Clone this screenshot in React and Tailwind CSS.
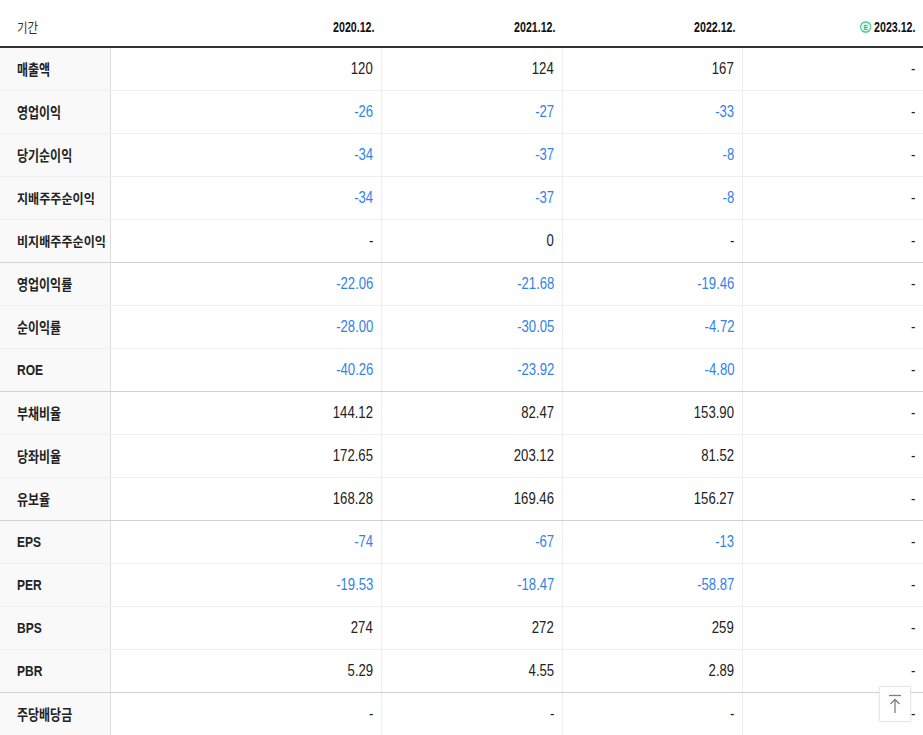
import React from 'react';

const periods = ['2020.12.', '2021.12.', '2022.12.', '2023.12.'];

// group: rows in the same group share light dividers; new group gets a darker line
const rows = [
  { label: '매출액', values: ['120', '124', '167', '-'], group: 0 },
  { label: '영업이익', values: ['-26', '-27', '-33', '-'], group: 0 },
  { label: '당기순이익', values: ['-34', '-37', '-8', '-'], group: 0 },
  { label: '지배주주순이익', values: ['-34', '-37', '-8', '-'], group: 0, small: true },
  { label: '비지배주주순이익', values: ['-', '0', '-', '-'], group: 0, small: true },
  { label: '영업이익률', values: ['-22.06', '-21.68', '-19.46', '-'], group: 1 },
  { label: '순이익률', values: ['-28.00', '-30.05', '-4.72', '-'], group: 1 },
  { label: 'ROE', values: ['-40.26', '-23.92', '-4.80', '-'], group: 1, latin: true },
  { label: '부채비율', values: ['144.12', '82.47', '153.90', '-'], group: 2 },
  { label: '당좌비율', values: ['172.65', '203.12', '81.52', '-'], group: 2 },
  { label: '유보율', values: ['168.28', '169.46', '156.27', '-'], group: 2 },
  { label: 'EPS', values: ['-74', '-67', '-13', '-'], group: 3, latin: true },
  { label: 'PER', values: ['-19.53', '-18.47', '-58.87', '-'], group: 3, latin: true },
  { label: 'BPS', values: ['274', '272', '259', '-'], group: 3, latin: true },
  { label: 'PBR', values: ['5.29', '4.55', '2.89', '-'], group: 3, latin: true },
  { label: '주당배당금', values: ['-', '-', '-', '-'], group: 4 },
];

const sans = "font-['Liberation_Sans',Arial,sans-serif]";
const korean = "font-['Noto_Sans_CJK_KR','Noto_Sans',sans-serif]";

function EstimateBadge() {
  return (
    <svg width="16" height="12" viewBox="0 0 16 12" className="mr-[3px] inline-block align-[-1px]">
      <ellipse cx="8" cy="6" rx="6.8" ry="5.2" fill="#dff6ec" stroke="#27c08a" strokeWidth="1.2" />
      <text x="8" y="8.6" textAnchor="middle" fontSize="8" fontWeight="700" fill="#1fae7b" fontFamily="Liberation Sans, Arial, sans-serif">E</text>
    </svg>
  );
}

function Label({ row }) {
  if (row.latin) {
    return (
      <span className={`${sans} inline-block origin-left scale-x-[0.8] text-[15px] font-bold text-[#222]`}>
        {row.label}
      </span>
    );
  }
  return (
    <span
      className={`${korean} inline-block origin-left whitespace-nowrap font-semibold text-[#222] ${
        row.small ? 'text-[13px] scale-x-[0.93]' : 'text-[15px] scale-x-[0.8]'
      }`}
    >
      {row.label}
    </span>
  );
}

export default function App() {
  return (
    <div className="relative h-[735px] w-[923px] overflow-hidden bg-white">
      {/* Header */}
      <div className="grid h-[48px] grid-cols-[111px_271px_181px_180px_180px] border-b-2 border-[#333]">
        <div className="flex items-center pl-[17px] pt-[8px]">
          <span className={`${korean} text-[13px] text-[#333] inline-block origin-left scale-x-[0.88]`}>기간</span>
        </div>
        {periods.map((p, i) => (
          <div key={p} className="flex items-center justify-end pr-[8px] pt-[8px]">
            <span className={`${sans} inline-block origin-right scale-x-[0.76] whitespace-nowrap text-[14px] font-bold text-[#111]`}>
              {i === 3 && <EstimateBadge />}
              {p}
            </span>
          </div>
        ))}
      </div>

      {/* Body */}
      {rows.map((row, idx) => {
        const next = rows[idx + 1];
        const groupEnd = next && next.group !== row.group;
        return (
          <div
            key={row.label}
            className={`grid h-[43px] grid-cols-[111px_271px_181px_180px_180px] border-b ${
              groupEnd ? 'border-[#d2d2d2]' : 'border-[#efefef]'
            }`}
          >
            <div className="flex items-center border-r border-[#dcdcdc] bg-[#f9f9f9] pl-[17px]">
              <Label row={row} />
            </div>
            {row.values.map((v, i) => (
              <div
                key={i}
                className={`flex items-center justify-end pr-[8px] ${i < 3 ? 'border-r border-[#eeeeee]' : ''}`}
              >
                <span
                  className={`${sans} inline-block origin-right scale-x-[0.82] text-[16px] ${
                    v.startsWith('-') && v.length > 1 ? 'text-[#3383e6]' : 'text-[#222]'
                  }`}
                >
                  {v}
                </span>
              </div>
            ))}
          </div>
        );
      })}

      {/* Scroll-to-top button */}
      <button className="absolute left-[879px] top-[686px] flex h-[36px] w-[32px] items-center justify-center border border-[#e8e8e8] bg-white shadow-[0_0_3px_rgba(0,0,0,0.06)]">
        <svg width="16" height="22" viewBox="0 0 16 22" fill="none" stroke="#7d7d7d" strokeWidth="1.3">
          <path d="M2 2.5h12" />
          <path d="M8 20V6.5" />
          <path d="M3.5 11L8 6.5l4.5 4.5" />
        </svg>
      </button>
    </div>
  );
}
